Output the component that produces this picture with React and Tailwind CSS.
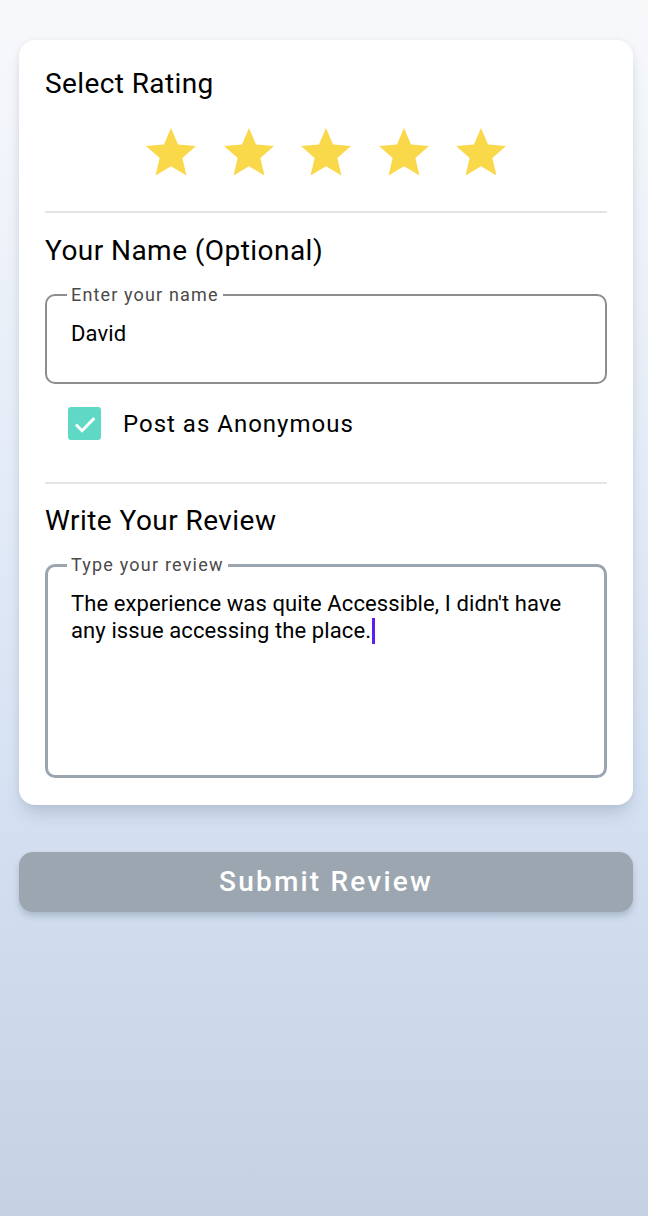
import React, { useState } from 'react';

const Star = () => (
    <svg viewBox="0 0 24 24" className="w-[60px] h-[60px]">
        <path
            fill="#f9d84a"
            d="M12 17.27L18.18 21l-1.64-7.03L22 9.24l-7.19-.61L12 2 9.19 8.63 2 9.24l5.46 4.73L5.82 21z"
        />
    </svg>
);

const App = () => {
    const [anonymous, setAnonymous] = useState(true);

    return (
        <div
            className="min-h-screen w-full bg-[linear-gradient(180deg,#f8f9fb_0%,#e6edf8_35%,#d5e1f2_66%,#c5d2e3_100%)] pt-[40px] pl-[19px] pr-[15px]"
            style={{ fontFamily: 'Roboto, "Noto Sans", sans-serif' }}
        >
            {/* card */}
            <div className="bg-white rounded-[16px] px-[26px] pt-[27px] pb-[27px] shadow-[0_12px_16px_-4px_rgba(70,90,120,0.22),0_0_6px_rgba(0,0,0,0.06)]">
                <h2 className="text-[28px] leading-[34px] tracking-[0.4px] text-black">Select Rating</h2>

                <div className="flex justify-center gap-[17.5px] mt-[22px]">
                    {[1, 2, 3, 4, 5].map(i => (
                        <Star key={i} />
                    ))}
                </div>

                <div className="h-[2px] bg-[#e4e4e4] mt-[28px]" />

                <h2 className="text-[28px] leading-[34px] tracking-[0.45px] text-black mt-[21px]">Your Name (Optional)</h2>

                <fieldset className="mt-[17px] border-2 border-[#8d8d8d] rounded-[10px] px-[20px] h-[99px]">
                    <legend className="px-[4px] text-[18px] leading-[20px] tracking-[1.15px] text-[#4a4a4a]">Enter your name</legend>
                    <div className="pl-[4px] pt-[16px] text-[22px] leading-[26px] tracking-[0.1px] text-black">David</div>
                </fieldset>

                <label className="flex items-center mt-[23px] ml-[23px] cursor-pointer">
                    <span
                        onClick={() => setAnonymous(!anonymous)}
                        className="w-[33px] h-[33px] rounded-[3px] bg-[#5fd8c6] flex items-center justify-center"
                    >
                        {anonymous && (
                            <svg viewBox="0 0 24 24" className="w-[32px] h-[32px]">
                                <path d="M5.2 12.4l4.6 4.6L19 7.6" fill="none" stroke="white" strokeWidth="2.2" />
                            </svg>
                        )}
                    </span>
                    <span className="ml-[22px] text-[24px] leading-[30px] tracking-[1px] text-black">Post as Anonymous</span>
                </label>

                <div className="h-[2px] bg-[#e4e4e4] mt-[42px]" />

                <h2 className="text-[28px] leading-[34px] tracking-[0.45px] text-black mt-[20px]">Write Your Review</h2>

                <fieldset className="mt-[17px] border-[3px] border-[#9ba5b0] rounded-[10px] px-[19px] h-[223px]">
                    <legend className="px-[4px] text-[18px] leading-[20px] tracking-[1.2px] text-[#4a4a4a]">Type your review</legend>
                    <p className="pl-[4px] pt-[15px] text-[22px] leading-[27px] tracking-[0.1px] text-black">
                        The experience was quite Accessible, I didn't have any issue accessing the place.
                        <span className="inline-block align-[-6px] w-[3px] h-[26px] bg-[#5b1ff0] ml-[1px]" />
                    </p>
                </fieldset>
            </div>

            <button className="mt-[47px] w-full h-[60px] rounded-[14px] bg-[#9ca6b0] text-white text-[28px] font-medium tracking-[2.2px] shadow-[0_4px_6px_rgba(60,80,110,0.25)]">
                Submit Review
            </button>
        </div>
    );
};

export default App;
